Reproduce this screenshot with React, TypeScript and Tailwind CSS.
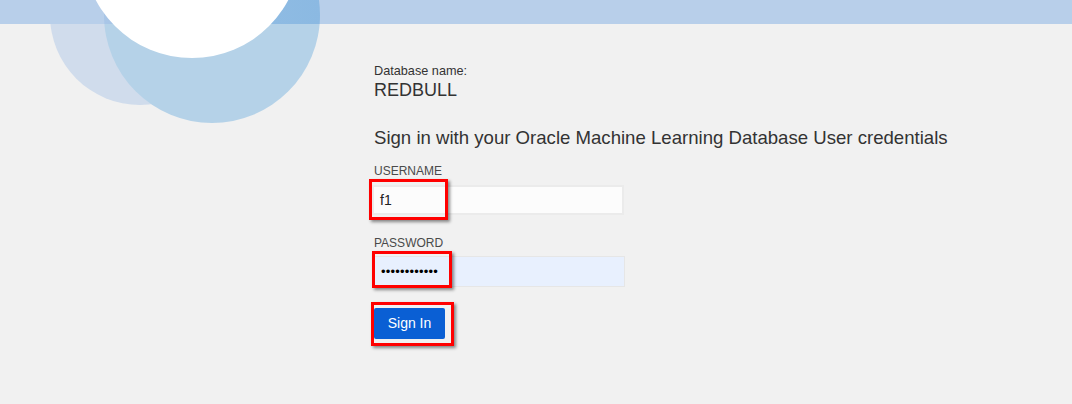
import React from 'react';

function Bubbles() {
  return (
    <svg className="absolute left-0 top-0" width="340" height="130" viewBox="0 0 340 130">
      <defs>
        <clipPath id="belowBand">
          <rect x="0" y="24" width="340" height="106" />
        </clipPath>
        <clipPath id="onBand">
          <rect x="0" y="0" width="340" height="24" />
        </clipPath>
        <linearGradient id="bandBlue" x1="0" y1="0" x2="1" y2="0">
          <stop offset="0" stopColor="#a9c6e7" />
          <stop offset="0.45" stopColor="#93bee4" />
          <stop offset="1" stopColor="#8bb9e2" />
        </linearGradient>
      </defs>
      <circle cx="140" cy="15" r="90" fill="#d0dcec" clipPath="url(#belowBand)" />
      <circle cx="212" cy="15" r="108" fill="#b5d2e8" clipPath="url(#belowBand)" />
      <circle cx="212" cy="15" r="108" fill="url(#bandBlue)" clipPath="url(#onBand)" />
      <circle cx="192" cy="-51" r="109" fill="#ffffff" />
    </svg>
  );
}

function Callout({ className }: { className: string }) {
  return (
    <div
      className={`pointer-events-none absolute border-[3px] border-[#ff0000] shadow-[2px_2px_3px_rgba(0,0,0,0.45)] ${className}`}
    />
  );
}

export default function App() {
  return (
    <div
      className="relative h-[404px] w-[1072px] overflow-hidden bg-[#f1f1f1] text-[#333333]"
      style={{ fontFamily: '"Liberation Sans", Arial, sans-serif' }}
    >
      <div className="h-[24px] w-full bg-[#b8cfea]" />
      <Bubbles />

      <div className="flex flex-col pl-[374px] pt-[39px]">
        <div className="text-[12.7px] leading-[16px]">Database name:</div>
        <div className="text-[18px] leading-[22px]">REDBULL</div>

        <div className="mt-[26px] text-[18.6px] leading-[22px]">
          Sign in with your Oracle Machine Learning Database User credentials
        </div>

        <label className="mt-[15px] text-[12px] leading-[14px] text-[#4a4a4a]">USERNAME</label>
        <div className="relative mt-[7px] -ml-[2px] w-[252px]">
          <div className="flex h-[30px] items-center border-2 border-[#ebebeb] bg-[#fcfcfc] pl-[6px] text-[14px] text-[#222]">
            f1
          </div>
          <Callout className="-left-[3px] -top-[6px] h-[41px] w-[79px]" />
        </div>

        <label className="mt-[21px] text-[12px] leading-[14px] text-[#4a4a4a]">PASSWORD</label>
        <div className="relative mt-[6px] w-[251px]">
          <div className="flex h-[31px] items-center border border-[#e6e6e6] bg-[#e8f0fe] pl-[6px] text-[13px] tracking-[0.2px] text-black">
            ••••••••••••
          </div>
          <Callout className="-left-[2px] -top-[5px] h-[37px] w-[80px]" />
        </div>

        <div className="relative mt-[21px] w-[71px]">
          <button className="h-[31px] w-[71px] rounded-[2px] bg-[#0a5fd4] text-[14px] text-white">
            Sign In
          </button>
          <Callout className="-left-[3px] -top-[6px] h-[44px] w-[83px]" />
        </div>
      </div>
    </div>
  );
}
